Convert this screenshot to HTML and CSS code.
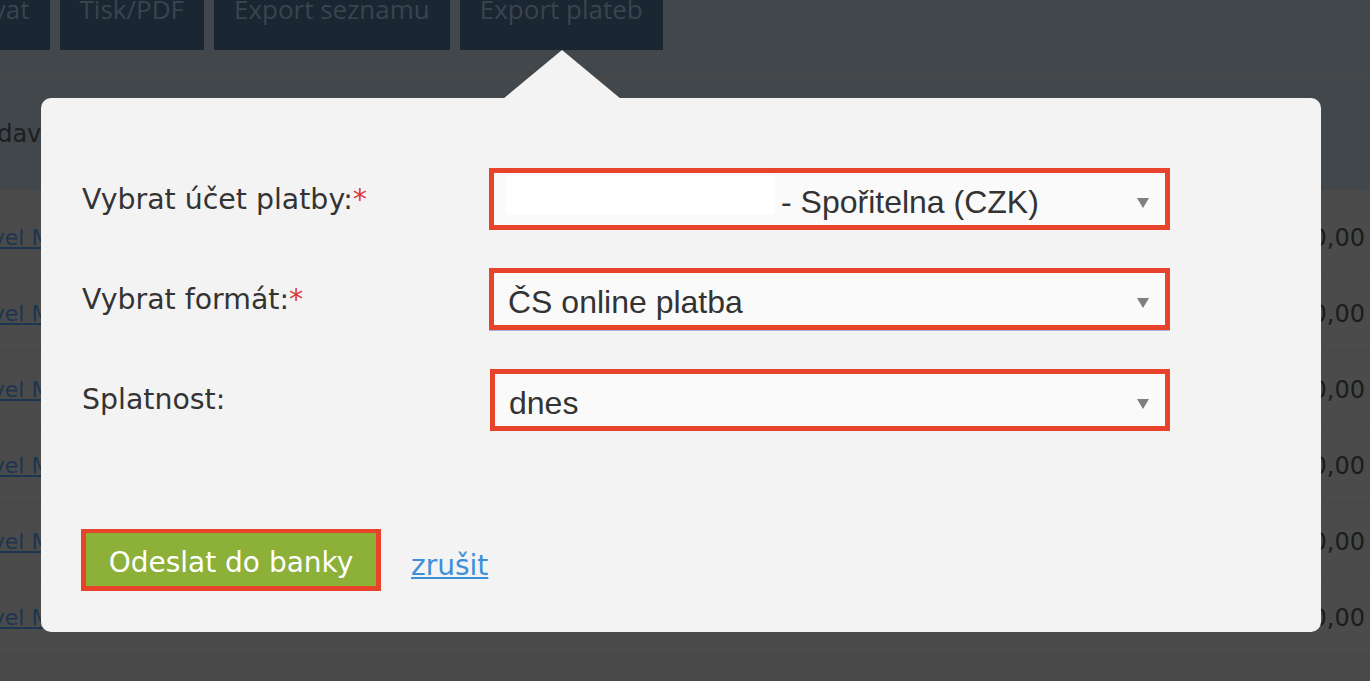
FILE: index.html
```html
<!DOCTYPE html>
<html lang="cs">
<head>
<meta charset="utf-8">
<title>Export plateb</title>
<link rel="stylesheet" href="styles.css">
</head>
<body>
<div class="page">
  <header class="header">
    <nav class="toolbar">
      <span class="tbtn tbtn-first">Editovat</span>
      <span class="tbtn">Tisk/PDF</span>
      <span class="tbtn">Export seznamu</span>
      <span class="tbtn">Export plateb</span>
    </nav>
    <div class="filter-row"><span class="col-head">Zadavatel</span></div>
  </header>
  <div class="rows">
    <div class="row"><a class="payee" href="#">Pavel M.</a><span class="amount">1 500,00</span></div>
    <div class="row"><a class="payee" href="#">Pavel M.</a><span class="amount">1 500,00</span></div>
    <div class="row"><a class="payee" href="#">Pavel M.</a><span class="amount">1 500,00</span></div>
    <div class="row"><a class="payee" href="#">Pavel M.</a><span class="amount">1 500,00</span></div>
    <div class="row"><a class="payee" href="#">Pavel M.</a><span class="amount">1 500,00</span></div>
    <div class="row"><a class="payee" href="#">Pavel M.</a><span class="amount">1 500,00</span></div>
  </div>
</div>

<div class="popover">
  <div class="popover-arrow"></div>
  <div class="form">
    <div class="label">Vybrat účet platby:<span class="req">*</span></div>
    <div class="select"><span class="redact"></span><span class="value value-after">- Spořitelna (CZK)</span><span class="caret"></span></div>

    <div class="label">Vybrat formát:<span class="req">*</span></div>
    <div class="select select-blue"><span class="value">ČS online platba</span><span class="caret"></span></div>

    <div class="label">Splatnost:</div>
    <div class="select select-shift"><span class="value">dnes</span><span class="caret"></span></div>
  </div>
  <div class="actions">
    <button class="submit" type="button">Odeslat do banky</button>
    <a class="cancel" href="#">zrušit</a>
  </div>
</div>
</body>
</html>
```

FILE: styles.css
```css
html, body {
  margin: 0;
  padding: 0;
}
body {
  width: 1370px;
  height: 681px;
  overflow: hidden;
  background: #494949;
  font-family: "DejaVu Sans", Verdana, sans-serif;
  position: relative;
}

/* ---------- dimmed page underneath ---------- */
.page {
  width: 1370px;
}
.header {
  background: #42474b;
  height: 190px;
  display: flex;
  flex-direction: column;
}
.toolbar {
  display: flex;
  gap: 10px;
  margin-top: -32px;
  height: 82px;
  flex: none;
}
.tbtn {
  background: #1b2633;
  color: #39444f;
  font-family: "Open Sans", sans-serif;
  font-size: 26px;
  padding: 0 20px;
  display: flex;
  align-items: center;
  white-space: nowrap;
}
.tbtn-first {
  margin-left: -89px;
}
.filter-row {
  margin-top: 26px;
  border-top: 2px solid #4a4745;
  flex: 1;
  display: flex;
  align-items: center;
}
.col-head {
  margin-left: -34px;
  font-size: 24px;
  color: #1c1e20;
}
.rows {
  background: #4b4b4b;
  padding-top: 10px;
}
.row {
  height: 76px;
  box-sizing: border-box;
  border-bottom: 1px solid #474747;
  display: flex;
  align-items: center;
  justify-content: space-between;
}
.payee {
  margin-left: -34px;
  font-size: 22px;
  color: #1b3552;
  text-decoration: underline;
}
.amount {
  font-size: 24px;
  color: #1c1c1c;
  padding-right: 5px;
}

/* ---------- popover ---------- */
.popover {
  position: absolute;
  left: 41px;
  top: 98px;
  width: 1280px;
  height: 534px;
  box-sizing: border-box;
  padding: 70px 151px 0 41px;
  background: #f3f3f3;
  border-radius: 10px;
}
.popover-arrow {
  position: absolute;
  left: 462px;
  top: -48px;
  width: 118px;
  height: 49px;
  background: #f3f3f3;
  clip-path: polygon(50% 0, 100% 100%, 0 100%);
}
.form {
  display: grid;
  grid-template-columns: 407px 681px;
  row-gap: 38px;
  align-items: center;
}
.label {
  font-size: 28.4px;
  color: #333333;
  white-space: nowrap;
}
.req {
  color: #d9393b;
}
.select {
  height: 62px;
  box-sizing: border-box;
  border: 5px solid #e8442b;
  background: #fafafa;
  display: flex;
  align-items: center;
  padding: 0 16px 0 14px;
  font-family: "Liberation Sans", Arial, sans-serif;
  font-size: 32px;
  color: #333333;
}
.select-blue {
  box-shadow: 0 1px 0 #a6b4dc;
}
.select-shift {
  margin-left: 1px;
  margin-top: 1px;
}
.value {
  padding-top: 7px;
  white-space: nowrap;
}
.redact {
  align-self: flex-start;
  margin-top: 1px;
  margin-left: -2px;
  width: 269px;
  height: 41px;
  background: #ffffff;
  flex: none;
}
.value-after {
  margin-left: 6px;
}
.caret {
  margin-left: auto;
  margin-top: 7px;
  width: 0;
  height: 0;
  border-left: 6px solid transparent;
  border-right: 6px solid transparent;
  border-top: 10px solid #7f7f7f;
}
.actions {
  margin-top: 98px;
  margin-left: -1px;
  display: flex;
  align-items: center;
  gap: 30px;
}
.submit {
  width: 300px;
  height: 62px;
  box-sizing: border-box;
  border: 5px solid #e8442b;
  border-top-width: 4px;
  background: #8cb038;
  color: #ffffff;
  font-family: "DejaVu Sans", Verdana, sans-serif;
  font-size: 28px;
  padding: 5px 0 0;
  margin: 0;
}
.cancel {
  font-size: 28px;
  color: #3e8fd9;
  text-decoration: underline;
  padding-top: 10px;
}
```
